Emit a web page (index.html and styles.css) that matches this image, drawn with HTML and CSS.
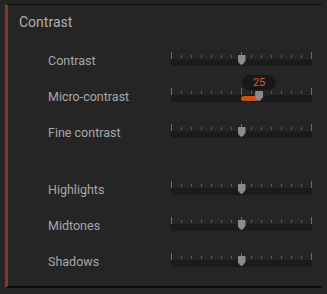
FILE: index.html
```html
<!DOCTYPE html>
<html lang="en">
<head>
<meta charset="UTF-8">
<meta name="viewport" content="width=device-width, initial-scale=1.0">
<title>Contrast</title>
<link rel="stylesheet" href="styles.css">
</head>
<body>

<div class="panel">
    <div class="panel-title">Contrast</div>

    <div class="row">
        <div class="label">Contrast</div>
        <div class="slider">
            <div class="ticks"></div>
            <div class="track"></div>
            <div class="thumb" style="left: 50%"></div>
        </div>
    </div>
    <div class="row">
        <div class="label">Micro-contrast</div>
        <div class="slider">
            <div class="ticks"></div>
            <div class="track">
                <div class="fill" style="left: 50%; width: 12.5%"></div>
            </div>
            <div class="thumb" style="left: 62.5%"></div>
            <div class="bubble" style="left: 62.5%">25</div>
        </div>
    </div>
    <div class="row">
        <div class="label">Fine contrast</div>
        <div class="slider">
            <div class="ticks"></div>
            <div class="track"></div>
            <div class="thumb" style="left: 50%"></div>
        </div>
    </div>

    <div class="spacer"></div>

    <div class="row">
        <div class="label">Highlights</div>
        <div class="slider">
            <div class="ticks"></div>
            <div class="track"></div>
            <div class="thumb" style="left: 50%"></div>
        </div>
    </div>
    <div class="row">
        <div class="label">Midtones</div>
        <div class="slider">
            <div class="ticks"></div>
            <div class="track"></div>
            <div class="thumb" style="left: 50%"></div>
        </div>
    </div>
    <div class="row">
        <div class="label">Shadows</div>
        <div class="slider">
            <div class="ticks"></div>
            <div class="track"></div>
            <div class="thumb" style="left: 50%"></div>
        </div>
    </div>
</div>

</body>
</html>
```

FILE: styles.css
```css
body {
    margin: 0;
    background-color: #252525;
    font-family: Roboto, "Liberation Sans", sans-serif;
    color: #a9a9a9;
    height: 294px;
    overflow: hidden;
}
.panel {
    margin: 4px 0 0 5px;
    width: 314px;
    height: 281px;
    border-top: 1px solid #0c0c0c;
    border-bottom: 2px solid #0c0c0c;
    border-left: 3px solid #86391c; /* rust accent */
    display: flex;
    flex-direction: column;
}
.panel-title {
    font-size: 14px;
    line-height: 17px;
    padding: 9px 0 0 11px;
    color: #b0b0b0;
}
.panel-title + .row {
    margin-top: 11px;
}
.row {
    height: 36px;
    display: flex;
    align-items: center;
}
.spacer {
    height: 21px;
}
.label {
    width: 123px;
    padding-left: 40px;
    font-size: 12.5px;
    color: #a8a8a8;
}
.slider {
    position: relative;
    width: 141px;
    margin-top: -2px;
}
.ticks {
    height: 7px;
    background:
        linear-gradient(#6c6c6c, #6c6c6c) left top / 1px 7px no-repeat,
        linear-gradient(#6c6c6c, #6c6c6c) 70px top / 1px 7px no-repeat,
        linear-gradient(#6c6c6c, #6c6c6c) right top / 1px 7px no-repeat,
        repeating-linear-gradient(to right, #5a5a5a 0 1px, transparent 1px 10px) left 3px / 141px 3px no-repeat;
}
.track {
    position: relative;
    height: 7px;
    background-color: #1b1b1b;
}
.fill {
    position: absolute;
    top: 1px;
    height: 5px;
    margin-left: -1px;
    background-color: #c9521b;
    border-radius: 3px 0 0 3px;
}
.thumb {
    position: absolute;
    top: 3px;
    width: 8px;
    height: 10px;
    margin-left: -4px;
    background-color: #8b8b8b;
    clip-path: polygon(0 0, 100% 0, 100% 60%, 70% 90%, 50% 100%, 30% 90%, 0 60%);
    border-radius: 1px;
}
.bubble {
    position: absolute;
    top: -13px;
    width: 34px;
    height: 15px;
    margin-left: -17px;
    border-radius: 8px;
    background-color: #171717;
    color: #d0612a;
    font-size: 11px;
    line-height: 15px;
    text-align: center;
}
```
